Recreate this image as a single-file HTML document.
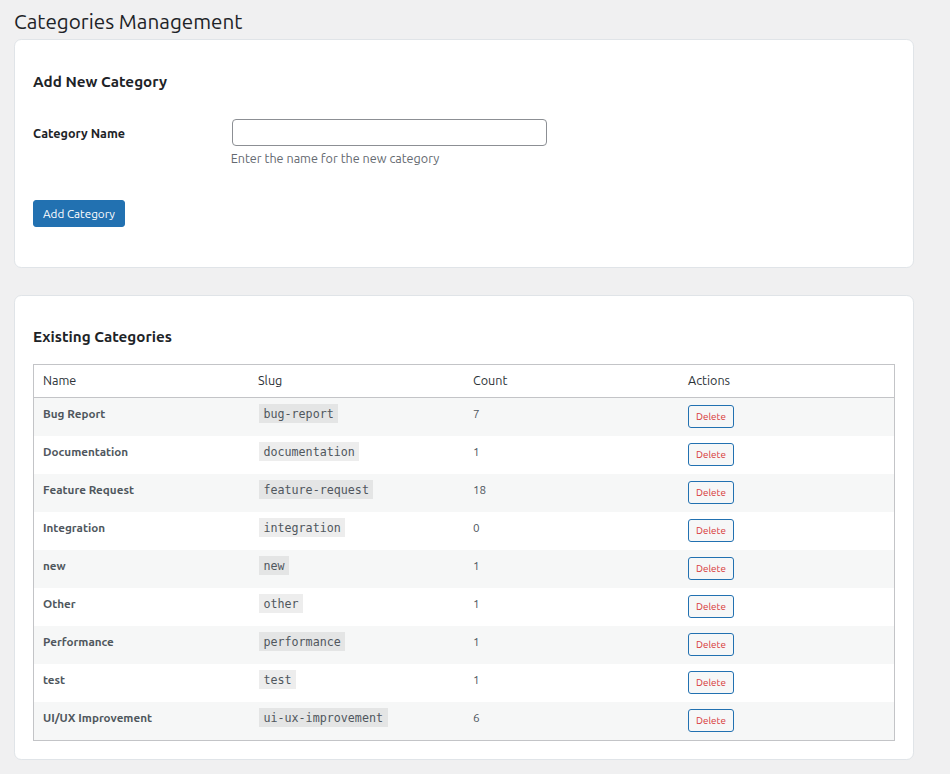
<!DOCTYPE html>
<html lang="en">
<head>
<meta charset="utf-8">
<title>Categories Management</title>
<style>
*{box-sizing:border-box}
html,body{margin:0;padding:0}
body{width:950px;height:774px;overflow:hidden;background:#f0f0f1;color:#3c434a;font-family:Ubuntu,"Liberation Sans",sans-serif;font-size:13px;line-height:1.4em;position:relative}
.wrap{position:absolute;left:14px;top:0;width:900px}
h1{font-size:20.7px;font-weight:400;margin:0;padding:9px 0 4px;line-height:1.3;color:#1d2327;height:39px;white-space:nowrap}
.card{background:#fff;border:1px solid #e0e4e8;border-radius:7.2px;width:900px;padding:0 18px;position:relative}
.card1{height:229px;margin-top:0}
.card2{height:465px;margin-top:27px}
h2{font-size:15.21px;font-weight:700;color:#1d2327;margin:0;line-height:20px;white-space:nowrap}
.card1 h2{padding-top:32px}
.card2 h2{padding-top:31px}
.form-row{position:absolute;left:18px;top:79px;width:860px;height:60px}
.form-row label{position:absolute;left:0;top:5px;font-size:12.6px;font-weight:700;color:#1d2327;line-height:18px;white-space:nowrap}
.form-row input{position:absolute;left:199px;top:0;width:315px;height:27px;border:1px solid #8c8f94;border-radius:4px;background:#fff;padding:0 8px;font-size:14px;font-family:inherit;color:#2c3338;margin:0;outline:0}
.form-row .description{position:absolute;left:197.7px;top:30px;margin:0;font-size:12.6px;line-height:18px;color:#646970;white-space:nowrap}
.btn-primary{position:absolute;left:18px;top:160px;height:27px;width:92px;background:#2271b1;border:1px solid #2271b1;border-radius:3px;color:#fff;font-size:11.7px;font-family:inherit;line-height:26px;padding:0;text-align:center;white-space:nowrap}
table{position:absolute;left:18px;top:68px;width:862px;border:1px solid #c3c4c7;border-collapse:separate;border-spacing:0;table-layout:fixed;background:#fff}
th{font-weight:400;text-align:left;font-size:12.6px;line-height:1.4em;color:#2c3338;padding:0 9px;height:33px;border-bottom:1px solid #c3c4c7;white-space:nowrap}
td{font-size:11.7px;line-height:1.5em;padding:0 9px;height:38px;vertical-align:top;color:#50575e;white-space:nowrap}
tbody tr:nth-child(odd) td{background:#f6f7f7}
td strong{font-weight:700;color:#50575e;display:block;padding-top:7px}
td .cnt{display:block;padding-top:7px}
code{font-family:"DejaVu Sans Mono","Liberation Mono",monospace;font-size:11.7px;background:rgba(0,0,0,.07);padding:3px 4.5px 2px;margin:6px .9px 0;display:inline-block;line-height:14px;color:#50575e}
.del{display:inline-block;margin-top:7px;margin-left:0;height:23px;width:46px;border:1px solid #2271b1;border-radius:3px;background:#f6f7f7;color:#d63638;font-size:9.9px;line-height:21px;text-align:center}
</style>
</head>
<body>
<div class="wrap">
<h1>Categories Management</h1>
<div class="card card1">
<h2>Add New Category</h2>
<div class="form-row">
<label>Category Name</label>
<input type="text" value="">
<p class="description">Enter the name for the new category</p>
</div>
<div class="btn-primary">Add Category</div>
</div>
<div class="card card2">
<h2>Existing Categories</h2>
<table>
<colgroup><col style="width:215px"><col style="width:215px"><col style="width:215px"><col></colgroup>
<thead><tr><th>Name</th><th>Slug</th><th>Count</th><th>Actions</th></tr></thead>
<tbody>
<tr><td><strong>Bug Report</strong></td><td><code>bug-report</code></td><td><span class="cnt">7</span></td><td><span class="del">Delete</span></td></tr>
<tr><td><strong>Documentation</strong></td><td><code>documentation</code></td><td><span class="cnt">1</span></td><td><span class="del">Delete</span></td></tr>
<tr><td><strong>Feature Request</strong></td><td><code>feature-request</code></td><td><span class="cnt">18</span></td><td><span class="del">Delete</span></td></tr>
<tr><td><strong>Integration</strong></td><td><code>integration</code></td><td><span class="cnt">0</span></td><td><span class="del">Delete</span></td></tr>
<tr><td><strong>new</strong></td><td><code>new</code></td><td><span class="cnt">1</span></td><td><span class="del">Delete</span></td></tr>
<tr><td><strong>Other</strong></td><td><code>other</code></td><td><span class="cnt">1</span></td><td><span class="del">Delete</span></td></tr>
<tr><td><strong>Performance</strong></td><td><code>performance</code></td><td><span class="cnt">1</span></td><td><span class="del">Delete</span></td></tr>
<tr><td><strong>test</strong></td><td><code>test</code></td><td><span class="cnt">1</span></td><td><span class="del">Delete</span></td></tr>
<tr><td><strong>UI/UX Improvement</strong></td><td><code>ui-ux-improvement</code></td><td><span class="cnt">6</span></td><td><span class="del">Delete</span></td></tr>
</tbody>
</table>
</div>
</div>
</body>
</html>
